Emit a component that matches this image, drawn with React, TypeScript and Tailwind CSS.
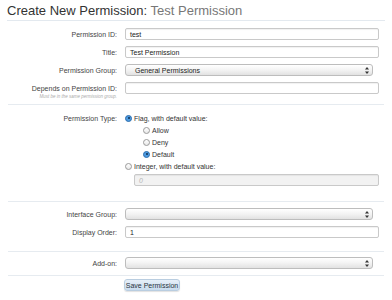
import React from "react"

const font = { fontFamily: '"Liberation Sans", Arial, sans-serif' }

function TextBox({ value, disabled }: { value?: string; disabled?: boolean }) {
  return (
    <div
      className={`flex h-[12px] w-full items-center rounded-[2px] border border-[#c9c9c9] px-[4px] text-[7px] leading-none shadow-[inset_0_1px_1px_rgba(0,0,0,0.06)] ${
        disabled ? "bg-[#f2f2f2] text-[#b5b5b5] italic" : "bg-white text-[#222]"
      }`}
    >
      {value}
    </div>
  )
}

function SelectBox({ value }: { value?: string }) {
  return (
    <div className="flex h-[12px] w-[248px] items-center justify-between rounded-[3px] border border-[#bdbdbd] bg-gradient-to-b from-white via-[#f3f3f3] to-[#e2e2e2] pl-[9px] pr-[3px] text-[7px] leading-none text-[#222]">
      <span>{value}</span>
      <svg width="4" height="7" viewBox="0 0 4 7">
        <path d="M2 0 L4 2.6 L0 2.6 Z" fill="#333" />
        <path d="M2 7 L4 4.4 L0 4.4 Z" fill="#333" />
      </svg>
    </div>
  )
}

function Radio({ checked, label }: { checked?: boolean; label: string }) {
  return (
    <div className="flex items-center gap-[2px] text-[7px] leading-none text-[#333]">
      <span
        className={`flex h-[7px] w-[7px] items-center justify-center rounded-full border ${
          checked ? "border-[#2f6fae] bg-[#4c9ae0]" : "border-[#9a9a9a] bg-gradient-to-b from-white to-[#e8e8e8]"
        }`}
      >
        {checked && <span className="h-[2px] w-[2px] rounded-full bg-[#0e2d4d]" />}
      </span>
      <span>{label}</span>
    </div>
  )
}

function Row({ label, hint, children, className = "" }: { label: string; hint?: string; children: React.ReactNode; className?: string }) {
  return (
    <div className={`flex h-[12px] items-start ${className}`}>
      <div className="relative w-[117px] text-right">
        <div className="flex h-[12px] items-center justify-end text-[7px] leading-none text-[#444]">{label}</div>
        {hint && (
          <div className="absolute right-0 top-[13px] whitespace-nowrap text-[4.5px] italic leading-none text-[#aaa]">{hint}</div>
        )}
      </div>
      <div className="ml-[8px] w-[254px]">{children}</div>
    </div>
  )
}

function Divider({ className = "" }: { className?: string }) {
  return <div className={`mx-[8px] h-px bg-[#e6ebf0] ${className}`} />
}

export default function App() {
  return (
    <div className="h-[300px] w-[392px] overflow-hidden bg-white" style={font}>
      <h1 className="mx-[7px] h-[21px] border-b border-[#e3e9ef] pt-[3px] text-[13px] leading-[15px] text-[#333]">
        Create New Permission: <span className="text-[#777]">Test Permission</span>
      </h1>

      <div className="mt-[7px] flex flex-col gap-[6px]">
        <Row label="Permission ID:">
          <TextBox value="test" />
        </Row>
        <Row label="Title:">
          <TextBox value="Test Permission" />
        </Row>
        <Row label="Permission Group:">
          <SelectBox value="General Permissions" />
        </Row>
        <Row label="Depends on Permission ID:" hint="Must be in the same permission group.">
          <TextBox />
        </Row>
      </div>

      <Divider className="mt-[10px]" />

      <div className="mt-[7px] flex items-start">
        <div className="flex h-[12px] w-[117px] items-center justify-end text-[7px] leading-none text-[#444]">Permission Type:</div>
        <div className="ml-[8px] w-[254px]">
          <div className="flex h-[12px] items-center">
            <Radio checked label="Flag, with default value:" />
          </div>
          <div className="ml-[18px] flex flex-col">
            <div className="flex h-[12px] items-center">
              <Radio label="Allow" />
            </div>
            <div className="flex h-[12px] items-center">
              <Radio label="Deny" />
            </div>
            <div className="flex h-[12px] items-center">
              <Radio checked label="Default" />
            </div>
          </div>
          <div className="flex h-[13px] items-center">
            <Radio label="Integer, with default value:" />
          </div>
          <div className="ml-[9px] mt-[1px]">
            <TextBox value="0" disabled />
          </div>
        </div>
      </div>

      <Divider className="mt-[15px]" />

      <div className="mt-[6px] flex flex-col gap-[6px]">
        <Row label="Interface Group:">
          <SelectBox />
        </Row>
        <Row label="Display Order:">
          <TextBox value="1" />
        </Row>
      </div>

      <Divider className="mt-[13px]" />

      <Row label="Add-on:" className="mt-[5px]">
        <SelectBox />
      </Row>

      <Divider className="mt-[6px]" />

      <div className="ml-[124px] mt-[3px]">
        <button className="flex h-[12px] w-[56px] items-center justify-center rounded-[3px] border border-[#b9cde0] bg-gradient-to-b from-[#e6eff8] to-[#c9dcee] text-[7px] leading-none text-[#2a3440] shadow-[0_1px_1px_rgba(0,0,0,0.12)]">
          Save Permission
        </button>
      </div>
    </div>
  )
}
